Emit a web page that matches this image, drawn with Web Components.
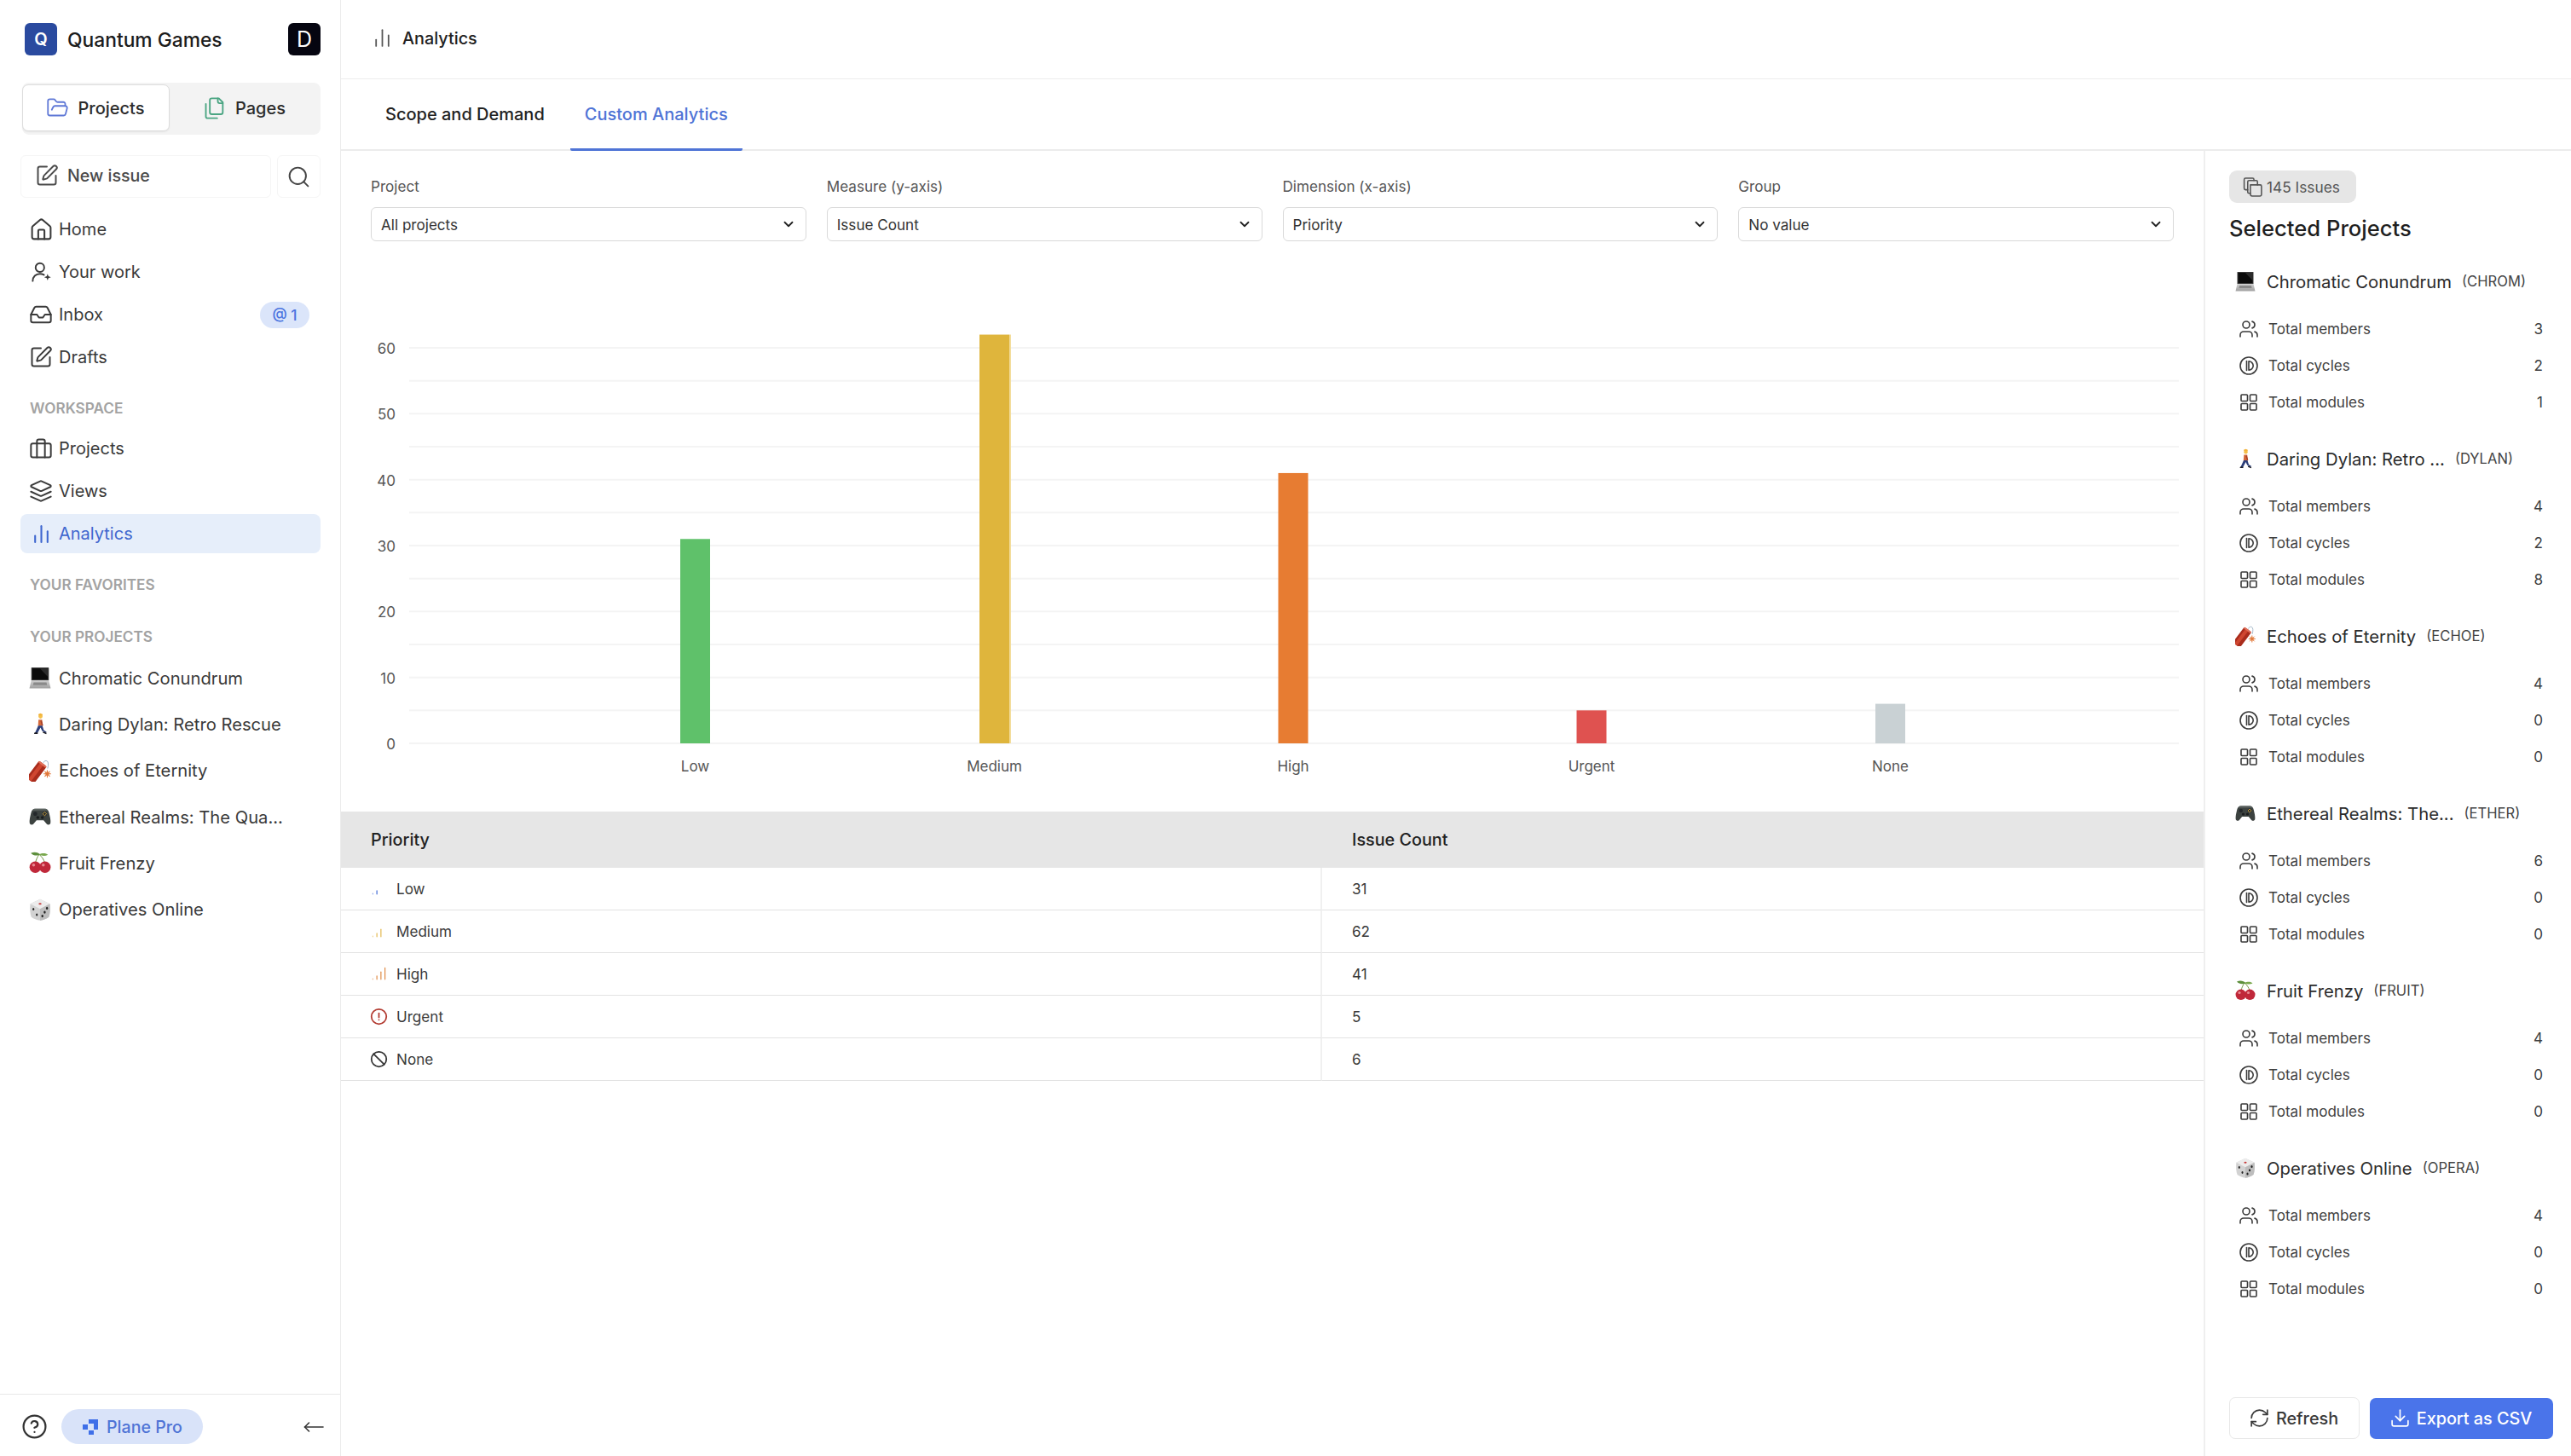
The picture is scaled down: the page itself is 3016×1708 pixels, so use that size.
<!DOCTYPE html>
<html lang="en"><head><meta charset="utf-8"><title>Analytics</title>
<style>
html,body{margin:0;padding:0;background:#fff;height:1708px;overflow:hidden;font-family:Inter,"Liberation Sans",sans-serif;color:#1f1f1f}
</style></head><body>
<app-shell></app-shell>
<script>
const P={
 folder:'<path d="m6 14 1.5-2.9A2 2 0 0 1 9.24 10H20a2 2 0 0 1 1.94 2.5l-1.54 6a2 2 0 0 1-1.95 1.5H4a2 2 0 0 1-2-2V5a2 2 0 0 1 2-2h3.9a2 2 0 0 1 1.69.9l.81 1.2a2 2 0 0 0 1.67.9H18a2 2 0 0 1 2 2v2"/>',
 files:'<path d="M20 7h-3a2 2 0 0 1-2-2V2"/><path d="M9 18a2 2 0 0 1-2-2V4a2 2 0 0 1 2-2h7l4 4v10a2 2 0 0 1-2 2Z"/><path d="M3 7.6v12.8A1.6 1.6 0 0 0 4.6 22h9.8"/>',
 pen:'<path d="M12 3H5a2 2 0 0 0-2 2v14a2 2 0 0 0 2 2h14a2 2 0 0 0 2-2v-7"/><path d="M18.375 2.625a1 1 0 0 1 3 3l-9.013 9.014a2 2 0 0 1-.853.505l-2.873.84a.5.5 0 0 1-.62-.62l.84-2.873a2 2 0 0 1 .506-.852z"/>',
 search:'<circle cx="11" cy="11" r="8"/><path d="m21 21-4.3-4.3"/>',
 home:'<path d="M15 21v-8a1 1 0 0 0-1-1h-4a1 1 0 0 0-1 1v8"/><path d="M3 10a2 2 0 0 1 .709-1.528l7-5.999a2 2 0 0 1 2.582 0l7 5.999A2 2 0 0 1 21 10v9a2 2 0 0 1-2 2H5a2 2 0 0 1-2-2z"/>',
 work:'<circle cx="10.5" cy="7" r="4.5"/><path d="M3 21c0-4.4 3.2-7.5 7.5-7.5 1.6 0 3 .4 4.2 1.1"/><path d="M18.5 13.5l.9 2.6 2.6.9-2.6.9-.9 2.6-.9-2.6-2.6-.9 2.6-.9z" fill="currentColor" stroke="none"/>',
 inbox:'<polyline points="22 12 16 12 14 15 10 15 8 12 2 12"/><path d="M5.45 5.11 2 12v6a2 2 0 0 0 2 2h16a2 2 0 0 0 2-2v-6l-3.45-6.89A2 2 0 0 0 16.76 4H7.24a2 2 0 0 0-1.79 1.11z"/>',
 brief:'<rect x="2" y="7" width="20" height="14" rx="2"/><path d="M16 21V5a2 2 0 0 0-2-2h-4a2 2 0 0 0-2 2v16"/>',
 layers:'<path d="m12.83 2.18a2 2 0 0 0-1.66 0L2.6 6.08a1 1 0 0 0 0 1.83l8.58 3.91a2 2 0 0 0 1.66 0l8.58-3.9a1 1 0 0 0 0-1.83Z"/><path d="m22 17.65-9.17 4.16a2 2 0 0 1-1.66 0L2 17.65"/><path d="m22 12.65-9.17 4.16a2 2 0 0 1-1.66 0L2 12.65"/>',
 chart:'<path d="M5 21v-7"/><path d="M12 21V3"/><path d="M19 21V9"/>',
 users:'<path d="M16 21v-2a4 4 0 0 0-4-4H6a4 4 0 0 0-4 4v2"/><circle cx="9" cy="7" r="4"/><path d="M22 21v-2a4 4 0 0 0-3-3.87"/><path d="M16 3.13a4 4 0 0 1 0 7.75"/>',
 cycle:'<circle cx="12" cy="12" r="10"/><path d="M9.5 6.5v11"/><path d="M12 6.8a5.2 5.2 0 0 1 0 10.4z"/>',
 grid:'<rect x="3" y="3" width="7.5" height="7.5" rx="1"/><rect x="13.5" y="3" width="7.5" height="7.5" rx="1"/><rect x="13.5" y="13.5" width="7.5" height="7.5" rx="1"/><rect x="3" y="13.5" width="7.5" height="7.5" rx="1"/>',
 refresh:'<path d="M3 12a9 9 0 0 1 9-9 9.75 9.75 0 0 1 6.74 2.74L21 8"/><path d="M21 3v5h-5"/><path d="M21 12a9 9 0 0 1-9 9 9.75 9.75 0 0 1-6.74-2.74L3 16"/><path d="M8 16H3v5"/>',
 download:'<path d="M21 15v4a2 2 0 0 1-2 2H5a2 2 0 0 1-2-2v-4"/><polyline points="7 10 12 15 17 10"/><line x1="12" y1="15" x2="12" y2="3"/>',
 help:'<circle cx="12" cy="12" r="10"/><path d="M9.09 9a3 3 0 0 1 5.83 1c0 2-3 3-3 3"/><path d="M12 17h.01"/>',
 arrow:'<path d="M23 12H1.5"/><path d="M6.5 7l-5 5 5 5"/>',
 chevron:'<path d="m6 9 6 6 6-6"/>',
 stack:'<path d="M9.5 9.500h11a1.500 1.500 0 0 1 1.500 1.500v9.500a1.500 1.500 0 0 1-1.500 1.500h-9a2 2 0 0 1-2-2z"/><path d="M9.500 19H8a1.500 1.500 0 0 1-1.500-1.500V6A1.500 1.500 0 0 1 8 4.500h8a1.500 1.500 0 0 1 1.500 1.500v3.500"/><path d="M6.500 15H4a1.500 1.500 0 0 1-1.500-1.500V3.500A1.500 1.500 0 0 1 4 2h8a1.500 1.500 0 0 1 1.500 1.500v1"/>',
 alert:'<circle cx="12" cy="12" r="10"/><path d="M12 7.5v5.5"/><path d="M12 16.4h.01"/>',
 ban:'<circle cx="12" cy="12" r="10"/><path d="m4.9 4.9 14.2 14.2"/>',
 p1:'<path d="M3 20v-1" opacity=".6"/><path d="M9 20v-5"/>',
 p2:'<path d="M3 20v-1" opacity=".6"/><path d="M9 20v-5"/><path d="M15 20V9"/>',
 p3:'<path d="M3 20v-1" opacity=".6"/><path d="M9 20v-5"/><path d="M15 20V9"/><path d="M21 20V3"/>'
};
/* s = drawn size, b = the box it takes in the flow */
const icon=(n,s,c,w,b)=>{b=b||s;const m=(b-s)/2;return `<svg xmlns="http://www.w3.org/2000/svg" width="${s}" height="${s}" viewBox="0 0 24 24" fill="none" stroke="${c||'currentColor'}" stroke-width="${w||1.9}" stroke-linecap="round" stroke-linejoin="round" style="flex:none;display:block;margin:${m}px">${P[n]}</svg>`};
const NS={home:29,work:27,inbox:28,pen:28,brief:28,layers:28,chart:25};
const EM={
 laptop:`<defs><linearGradient id="lg" x1="0" y1="0" x2="0" y2="1"><stop offset="0" stop-color="#cfcfcf"/><stop offset="1" stop-color="#a0a0a0"/></linearGradient></defs><path d="M3 1h18a.5.5 0 0 1 .5.5V15h-19V1.500A.5.500 0 0 1 3 1z" fill="#3a3a3a"/><path d="M3.500 2h17v12h-17z" fill="#0b0b0b"/><path d="M12 2h8.500v9z" fill="#3b3b3b" opacity=".7"/><path d="M2.500 15h19L23.500 23.500h-23z" fill="url(#lg)"/><path d="M5 17h14l.6 3H4.400z" fill="#8a8a8a"/>`,
 walk:`<circle cx="12.500" cy="4.200" r="2.200" fill="#f5c04a"/><path d="M10.200 3.200h4.600l-.2-1.700-2.300-.8-2 .9z" fill="#f2b33a"/><path d="M10.300 7.500h3.900l1 6.800H9.800z" fill="#d4683a"/><path d="M13.500 8l1.700 5.500-1.300.5-1.500-5z" fill="#a33f2b"/><path d="M10 14h4.500l1.500 5 3 1.800-.7 1.200-4-2.200-1.800-3.700-3.300 6H6.400z" fill="#2d3f7a"/><path d="M6 21.500h3.500V23H5.500zM15.500 20.500l3.700 1.500-.6 1.200-3.800-1.500z" fill="#1c1c24"/>`,
 tnt:`<g transform="rotate(37 8 13.500)"><rect x="3" y="2" width="10.500" height="23" rx="1.800" fill="#a92c1c"/><rect x="5.500" y="2" width="4" height="23" fill="#cf4630"/><rect x="3" y="2" width="10.500" height="2" rx="1" fill="#e0705a"/></g><path d="M15.500 3.500c.8-2 2.800-2.800 4.200-1.800 1.300 1 1.500 4 .5 8" fill="none" stroke="#9db1c4" stroke-width=".9"/><circle cx="19.800" cy="15.500" r="2.300" fill="#f0b070"/><path d="M19.800 11.500v8M15.800 15.500h8M17 12.700l5.600 5.600M22.600 12.700L17 18.300" stroke="#e0743a" stroke-width="1"/>`,
 pad:`<path d="M7 3.500h10c2.600 0 4.100 1.500 4.800 4.500.9 3.800 2 8.200 1.500 11-.4 2-2.900 2.300-4.200.9L15.800 16H8.200l-3.300 3.900c-1.300 1.400-3.800 1.100-4.200-.9-.5-2.800.6-7.200 1.500-11C2.900 5 4.400 3.500 7 3.500z" fill="#3c4240"/><path d="M6.800 3.500h10.400c1.500 0 2.700.6 3.500 1.900H3.300c.8-1.300 2-1.900 3.500-1.900z" fill="#5c6360"/><circle cx="6.800" cy="9" r="2.200" fill="#23272a"/><circle cx="17" cy="9" r="2.400" fill="#23272a"/><path d="M17 7l2 2-2 2-2-2z" fill="none" stroke="#c9a040" stroke-width=".9"/><circle cx="9.500" cy="13" r="1.600" fill="#1a1c1e"/><circle cx="14.500" cy="13" r="1.600" fill="#1a1c1e"/>`,
 cherry:`<path d="M7 12C8 8 9 6 11 3M17 12c-1-3.500-3-6.500-6-9" fill="none" stroke="#6a8f3a" stroke-width=".9"/><path d="M2 1.500C6-.3 10 .7 12.500 3.200 9 5 4.500 4.500 2 1.500z" fill="#5d8f3c"/><path d="M11 3c2.600-1.400 7.500-1.800 9.500.5-3 1.700-7 1.300-9.500-.5z" fill="#79a84d"/><circle cx="6.800" cy="16.800" r="6.200" fill="#c0283a"/><circle cx="17.300" cy="16.800" r="6.200" fill="#c0283a"/><circle cx="5" cy="14.500" r="1.600" fill="#e88a92"/><circle cx="15.500" cy="14.500" r="1.600" fill="#e88a92"/>`,
 die:`<path d="M12 .8l10.600 5c.6 6 .2 10.400-1.100 14.200-2.700 2-5.600 3.100-9.500 3.700-3.900-.6-6.800-1.700-9.500-3.700C1.200 16.200.8 11.800 1.400 5.800z" fill="#d2d2d2"/><path d="M12 .8l10.600 5L12 11.200 1.400 5.800z" fill="#ececec"/><path d="M12 11.200l10.600-5.400c.6 6 .2 10.400-1.100 14.200-2.700 2-5.600 3.100-9.500 3.700z" fill="#bdbdbd"/><ellipse cx="12" cy="5.800" rx="1.600" ry="1" fill="#c63b3b"/><ellipse cx="4.800" cy="11.500" rx="1" ry="1.400" fill="#222"/><ellipse cx="8.500" cy="17.500" rx="1" ry="1.400" fill="#222"/><ellipse cx="14.500" cy="19" rx="1.100" ry="1.500" fill="#222"/><ellipse cx="17" cy="14.800" rx="1.100" ry="1.500" fill="#222"/><ellipse cx="19.500" cy="10.500" rx="1.100" ry="1.500" fill="#222"/>`
};
let emId=0;
const emoji=(n,s)=>{const id='g'+(++emId);return `<svg xmlns="http://www.w3.org/2000/svg" width="${s}" height="${s}" viewBox="0 0 24 24" style="flex:none;display:block">${EM[n].replace(/"lg"/g,`"${id}"`).replace(/#lg/g,'#'+id)}</svg>`};

class Base extends HTMLElement{
 connectedCallback(){ if(!this.shadowRoot){const r=this.attachShadow({mode:'open'});r.innerHTML=this.render();} }
 a(n,d=''){return this.getAttribute(n)??d}
}
const def=(n,render)=>customElements.define(n,class extends Base{render(){return render.call(this)}});

def('app-shell',()=>`<style>:host{display:flex;width:3016px;height:1708px;overflow:hidden}
.main{flex:1;min-width:0;display:flex;flex-direction:column}
.body{flex:1;display:flex;min-height:0}</style>
<side-bar></side-bar>
<div class="main"><page-header></page-header><tab-bar></tab-bar>
<div class="body"><analytics-pane></analytics-pane><summary-panel></summary-panel></div></div>`);

def('nav-item',function(){const act=this.hasAttribute('active'),n=this.a('icon');return `<style>:host{display:flex;align-items:center;height:46px;margin-bottom:4px;padding:0 12px;gap:9px;border-radius:8px;font-size:20px;color:${act?'#3f67cf':'#3a3a3a'};background:${act?'#e6eefa':'transparent'};box-sizing:border-box}
.t{flex:1}.b{display:flex;align-items:center;justify-content:center;width:58px;height:31px;margin-right:1px;border-radius:16px;background:#dbe5fa;color:#4a74e0;font-size:17.500px;font-weight:500;box-sizing:border-box;gap:3px}</style>
${icon(n,NS[n],null,n=='chart'?2:1.7,24)}<span class="t"><slot></slot></span>${this.a('badge')?`<span class="b">${this.a('badge')}</span>`:''}`});

def('side-label',function(){return `<style>:host{display:block;height:24px;line-height:24px;padding-left:11px;font-size:17.200px;font-weight:600;color:#a3a3a3;letter-spacing:0}</style><slot></slot>`});

def('project-link',function(){return `<style>:host{display:flex;align-items:center;height:54.300px;padding-left:10px;gap:9px;font-size:20.200px;color:#3a3a3a}</style>${emoji(this.a('em'),26)}<span><slot></slot></span>`});

def('side-bar',()=>`<style>:host{display:flex;flex-direction:column;flex:none;width:400px;box-sizing:border-box;border-right:1px solid #ececec;height:1708px}
.wrap{flex:1;padding:27px 23px 0 24px;display:flex;flex-direction:column;min-height:0}
.head{display:flex;align-items:center;height:38px;padding:0 0 0 5px}
.logo,.user{width:38px;height:38px;border-radius:6px;display:flex;align-items:center;justify-content:center;flex:none;color:#fff}
.logo{background:#2a4a9f;font-size:20px;font-weight:600}
.user{background:#050510;font-size:25px}
.brand{flex:1;margin-left:12px;font-size:22.800px;font-weight:500;color:#1c1c1c}
.seg{display:flex;margin:32px 0 0 2px;height:61px;padding:2px 0 4px;box-sizing:border-box;background:#f3f3f3;border-radius:8px}
.tab{flex:1;display:flex;align-items:center;justify-content:center;gap:12px;font-size:20px;font-weight:500;color:#2c2c2c;border-radius:7px;box-sizing:border-box}
.tab.on{flex:none;width:173px;background:#fff;border:1px solid #ddd;box-shadow:0 1px 2px rgba(0,0,0,.06)}
.row{display:flex;gap:7px;margin-top:24px;height:50px}
.new,.sr{display:flex;align-items:center;height:50px;box-sizing:border-box;border:1px solid #f5f5f5;border-radius:6px;color:#444}
.new{flex:1;padding:0 0 2px 18px;gap:12px;font-size:19.600px;font-weight:500;color:#4a4a4a}
.sr{width:51px;justify-content:center}
nav{display:flex;flex-direction:column;margin-top:14px}
.foot{flex:none;height:73px;border-top:1px solid #e8e8e8;display:flex;align-items:center;padding:3px 19px 0 27px;box-sizing:border-box}
.pro{display:flex;align-items:center;gap:9px;height:41px;margin-left:19px;padding:0 24px;border-radius:21px;background:#d9e3f9;color:#4f74d6;font-size:19.600px;font-weight:500}
.sp{flex:1}</style>
<div class="wrap">
<div class="head"><div class="logo">Q</div><div class="brand">Quantum Games</div><div class="user">D</div></div>
<div class="seg"><div class="tab on">${icon('folder',27,'#5f78d6',1.6,24)}<span>Projects</span></div><div class="tab">${icon('files',28,'#4aa582',1.6,24)}<span>Pages</span></div></div>
<div class="row"><div class="new">${icon('pen',28,null,1.7,24)}<span>New issue</span></div><div class="sr">${icon('search',29,null,1.6,24)}</div></div>
<nav><nav-item icon="home">Home</nav-item><nav-item icon="work">Your work</nav-item><nav-item icon="inbox" badge="@ 1">Inbox</nav-item><nav-item icon="pen">Drafts</nav-item></nav>
<div style="height:21px"></div><side-label>WORKSPACE</side-label><div style="height:12px"></div>
<nav style="margin-top:0"><nav-item icon="brief">Projects</nav-item><nav-item icon="layers">Views</nav-item><nav-item icon="chart" active>Analytics</nav-item></nav>
<div style="height:21px"></div><side-label>YOUR FAVORITES</side-label><div style="height:37px"></div><side-label>YOUR PROJECTS</side-label><div style="height:9px"></div>
<project-link em="laptop">Chromatic Conundrum</project-link><project-link em="walk">Daring Dylan: Retro Rescue</project-link><project-link em="tnt">Echoes of Eternity</project-link><project-link em="pad">Ethereal Realms: The Qua...</project-link><project-link em="cherry">Fruit Frenzy</project-link><project-link em="die">Operatives Online</project-link>
</div>
<div class="foot">${icon('help',31,'#333',1.7,26)}<div class="pro"><svg width="20" height="20" viewBox="0 0 20 20" style="flex:none"><path d="M8 1h11v12H14V6H8z" fill="#3f6fe8"/><path d="M1 7h6v6H1z" fill="#3f6fe8"/><path d="M8 14h6v5H8z" fill="#3f6fe8"/></svg><span>Plane Pro</span></div><div class="sp"></div>${icon('arrow',24,'#333',1.6)}</div>`);

def('page-header',()=>`<style>:host{display:flex;align-items:center;height:93px;padding:0 0 3px 38px;gap:14px;box-sizing:border-box;border-bottom:1px solid #ededed;font-size:19.800px;font-weight:500;color:#222}</style>${icon('chart',25,'#555',1.7,20)}<span>Analytics</span>`);

def('tab-bar',()=>`<style>:host{display:flex;height:84px;padding:0 0 0 35px;gap:13px;box-sizing:border-box;border-bottom:2px solid #ececec;font-size:20px;font-weight:500;color:#222}
div{display:flex;align-items:center;padding:1px 17px 0;margin-bottom:-2px;border-bottom:3px solid transparent;box-sizing:border-box;border-radius:0 0 2px 2px}
.on{color:#4f74d6;border-bottom-color:#4f74d6}</style><div>Scope and Demand</div><div class="on">Custom Analytics</div>`);

def('filter-select',function(){return `<style>:host{display:flex;flex-direction:column;min-width:0}
label{height:24px;line-height:24px;font-size:17.100px;color:#555;margin-bottom:12px}
.box{height:40px;display:flex;align-items:center;justify-content:space-between;padding:0 11px 0 11px;border:1px solid #d9d9d9;border-radius:6px;box-sizing:border-box;font-size:17.100px;color:#333}</style>
<label>${this.a('label')}</label><div class="box"><span>${this.a('value')}</span>${icon('chevron',18,'#222',2.4)}</div>`});

def('bar-chart',()=>{
 const y0=872,u=7.7333,bars=[['Low',815.5,31,'#5fc16a'],['Medium',1166.5,62,'#dfb53c'],['High',1517,41,'#e77c32'],['Urgent',1867,5,'#df5250'],['None',2217.5,6,'#c9d1d4']];
 let s='';
 for(let i=0;i<=12;i++){const y=y0-i*38.667;s+=`<line x1="480" x2="2556" y1="${y}" y2="${y}" stroke="#f4f4f4" stroke-width="2"/>`;if(i%2==0)s+=`<text x="464" y="${y+7}" text-anchor="end">${i*5}</text>`;}
 for(const [n,x,v,c] of bars){s+=`<rect x="${x-17.500}" y="${y0-v*u}" width="35" height="${v*u}" fill="${c}"/><text x="${x}" y="905" text-anchor="middle">${n}</text>`;}
 s+=`<rect x="1184" y="392.500" width="2" height="479.500" fill="#f3dd9c"/>`;
 return `<style>:host{display:block;height:669px;flex:none}svg{display:block}text{font:400 17px Inter,"Liberation Sans",sans-serif;fill:#555}</style><svg width="2185" height="669" viewBox="400 283 2185 669">${s}</svg>`;
});

def('priority-row',function(){const n=this.a('icon'),c=this.a('color');const s=n[0]=='p'?19:21;return `<style>:host{display:grid;grid-template-columns:1151px 1fr;height:50px;font-size:17.100px;color:#3a3a3a}
div{display:flex;align-items:center;border-bottom:1px solid #e3e3e3;box-sizing:border-box}
.l{padding-left:35px;gap:12px;border-right:2px solid #f0f0f0}.r{padding-left:35px}</style><div class="l">${icon(n,s,c,n[0]=='p'?1.5:2,18)}<span>${this.a('name')}</span></div><div class="r">${this.a('value')}</div>`});

def('data-table',()=>`<style>:host{display:block}
.h{display:grid;grid-template-columns:1151px 1fr;height:66px;background:#e6e6e6;font-size:19.800px;font-weight:500;color:#222;align-items:center}
.h span{padding-left:35px}</style>
<div class="h"><span>Priority</span><span>Issue Count</span></div>
<priority-row icon="p1" color="#3f69d6" name="Low" value="31"></priority-row>
<priority-row icon="p2" color="#e3b94f" name="Medium" value="62"></priority-row>
<priority-row icon="p3" color="#e08a45" name="High" value="41"></priority-row>
<priority-row icon="alert" color="#b23a30" name="Urgent" value="5"></priority-row>
<priority-row icon="ban" color="#333" name="None" value="6"></priority-row>`);

def('analytics-pane',()=>`<style>:host{flex:1;min-width:0;display:flex;flex-direction:column}
.f{display:grid;grid-template-columns:repeat(4,1fr);gap:24px;padding:30px 35px 0;flex:none}</style>
<div class="f"><filter-select label="Project" value="All projects"></filter-select><filter-select label="Measure (y-axis)" value="Issue Count"></filter-select><filter-select label="Dimension (x-axis)" value="Priority"></filter-select><filter-select label="Group" value="No value"></filter-select></div>
<bar-chart></bar-chart><data-table></data-table>`);

def('stat-row',function(){return `<style>:host{display:flex;align-items:center;height:43px;padding:0 12px 0 12px;font-size:17.100px;color:#3f3f3f}
span{flex:1;margin-left:13px}</style>${icon(this.a('icon'),24,'#3a3a3a',1.6,21)}<span>${this.a('name')}</span><b style="font-weight:400">${this.a('value')}</b>`});

def('project-block',function(){const [m,c,d]=this.a('v').split(',');return `<style>:host{display:block;margin-bottom:23px}
.t{display:flex;align-items:center;height:44px;padding-left:7px;margin-bottom:12px;color:#2b2b2b}
.n{font-size:20.300px;margin-left:13px}.k{font-size:16.600px;margin-left:12px;color:#444}</style>
<div class="t">${emoji(this.a('em'),24)}<span class="n">${this.a('name')}</span><span class="k">(${this.a('key')})</span></div>
<stat-row icon="users" name="Total members" value="${m}"></stat-row><stat-row icon="cycle" name="Total cycles" value="${c}"></stat-row><stat-row icon="grid" name="Total modules" value="${d}"></stat-row>`});

def('summary-panel',()=>`<style>:host{flex:none;width:431px;box-sizing:border-box;border-left:2px solid #efefef;padding:23px 21px 20px 28px;display:flex;flex-direction:column}
.chip{display:flex;align-items:center;gap:6px;width:149px;height:38px;padding-left:16px;box-sizing:border-box;border-radius:9px;background:#e6e6e6;color:#555;font-size:17.300px}
h2{margin:12px 0 22px;height:36px;line-height:36px;font-size:25.600px;font-weight:500;color:#1f1f1f}
.sp{flex:1}
.btns{display:flex;gap:12px;align-items:center}
.b{display:flex;align-items:center;justify-content:center;gap:9px;border-radius:7px;box-sizing:border-box;font-size:19.800px;font-weight:500}
.a{width:153px;height:49px;border:1px solid #e8e8e8;color:#3a3a3a}
.e{width:215px;height:48px;background:#4a74ea;color:#fff}</style>
<div class="chip">${icon('stack',25,'#555',1.5,22)}<span>145 Issues</span></div><h2>Selected Projects</h2>
<project-block em="laptop" name="Chromatic Conundrum" key="CHROM" v="3,2,1"></project-block>
<project-block em="walk" name="Daring Dylan: Retro ..." key="DYLAN" v="4,2,8"></project-block>
<project-block em="tnt" name="Echoes of Eternity" key="ECHOE" v="4,0,0"></project-block>
<project-block em="pad" name="Ethereal Realms: The..." key="ETHER" v="6,0,0"></project-block>
<project-block em="cherry" name="Fruit Frenzy" key="FRUIT" v="4,0,0"></project-block>
<project-block em="die" name="Operatives Online" key="OPERA" v="4,0,0"></project-block>
<div class="sp"></div>
<div class="btns"><div class="b a">${icon('refresh',25,'#3a3a3a',1.6,21)}<span>Refresh</span></div><div class="b e">${icon('download',25,'#fff',1.6,21)}<span>Export as CSV</span></div></div>`);
</script></body></html>
